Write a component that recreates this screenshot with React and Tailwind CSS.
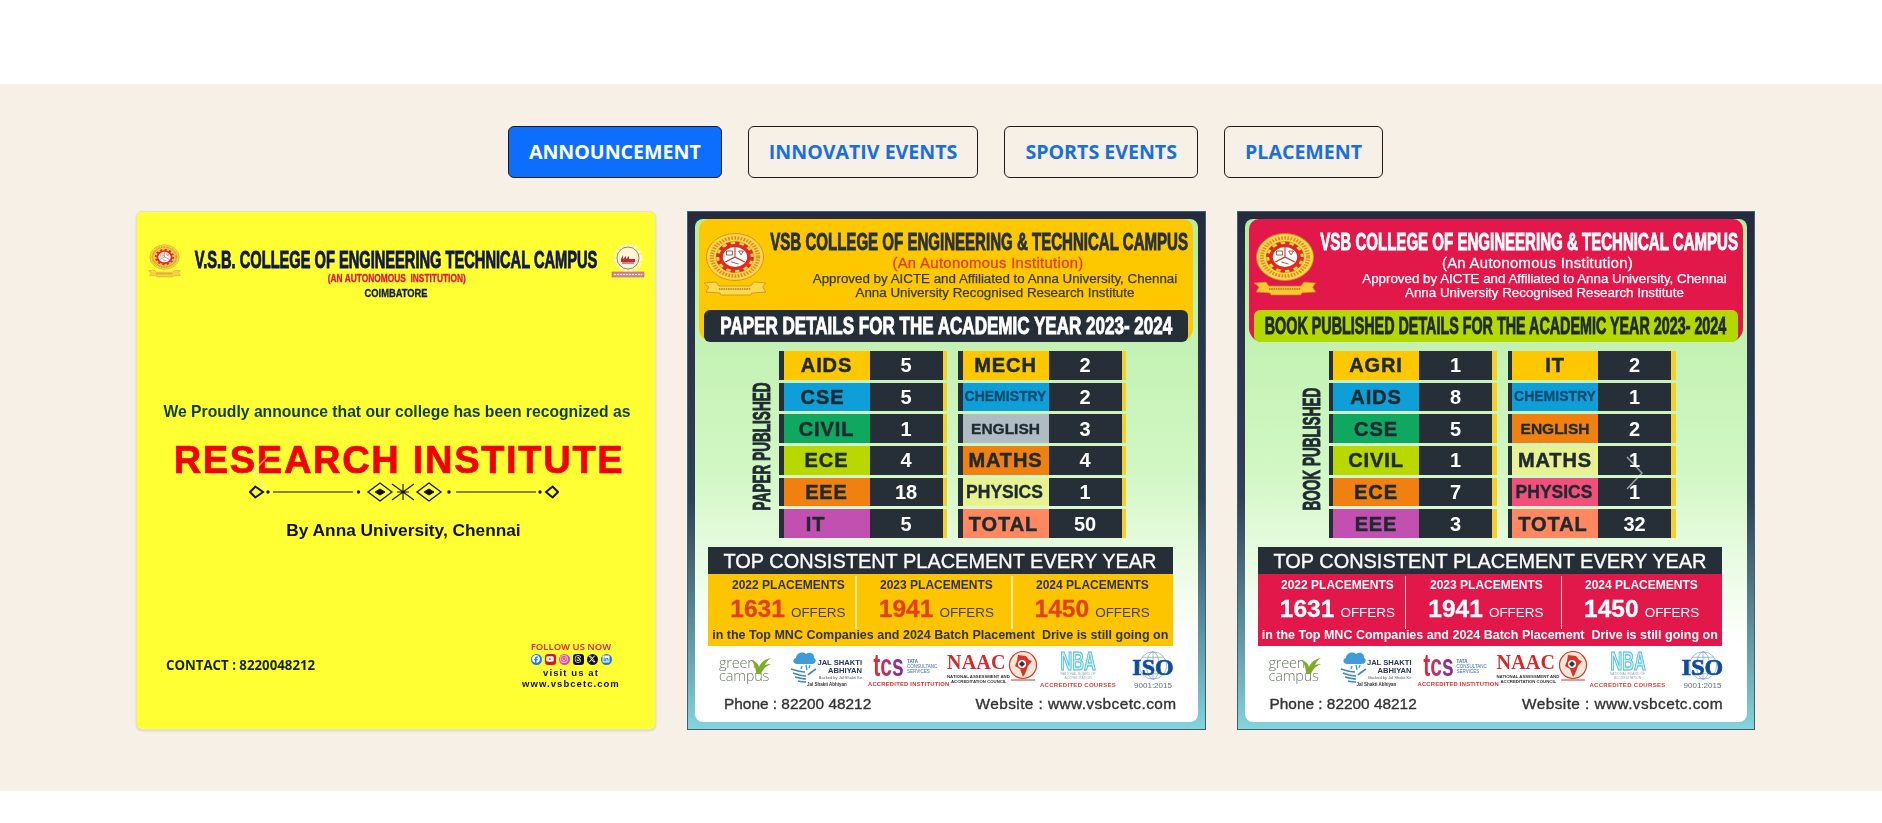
import React from "react";
import { FaFacebook, FaYoutube, FaInstagram, FaThreads, FaXTwitter, FaLinkedin } from "react-icons/fa6";

const sans = "font-['Liberation_Sans',Arial,sans-serif]";
const heavy = "font-bold [-webkit-text-stroke:0.95px_currentColor]";

function Sq({ className = "", children }) {
  return <span className={`inline-block whitespace-nowrap shrink-0 ${className}`}>{children}</span>;
}

function Seal({ className = "", ribbon = "#f6d24a" }) {
  return (
    <svg viewBox="0 0 56 65" preserveAspectRatio="none" className={className}>
      <g transform="translate(-6 0)">
        <circle cx="34" cy="25" r="23.5" fill="#fbd64a" stroke="#d98a1e" strokeWidth="0.8" />
        <circle cx="34" cy="25" r="19" fill="none" stroke="#c9761c" strokeWidth="3.4" strokeDasharray="1.4 1.2" opacity="0.75" />
        <circle cx="34" cy="25" r="15.5" fill="#fbd64a" stroke="#c9761c" strokeWidth="0.5" />
        <circle cx="34" cy="25" r="14" fill="none" stroke="#df2a20" strokeWidth="3" strokeDasharray="3.6 3.7" />
        <circle cx="34" cy="25" r="11.5" fill="#fff" stroke="#df2a20" strokeWidth="3" />
        <path d="M34 15v10M34 25l-8 5M34 25l8 5" stroke="#d62a20" strokeWidth="0.9" fill="none" />
        <path d="M27 19h5v4h-5zM37 19h4l-2 4zM31 30l6 2" stroke="#6b3b20" strokeWidth="0.7" fill="none" />
      </g>
      <g transform="scale(0.82 1)">
        <path d="M3 51l12 -1 3 4 32 0 3 -4 12 1 -3 4 3 5 -14 1 -1 2 -30 0 -1 -2 -14 -1 3 -5z" fill={ribbon} stroke="#c9801c" strokeWidth="0.7" />
        <path d="M18 57h32" stroke="#7a4a1c" strokeWidth="1" strokeDasharray="1.5 0.8" />
      </g>
    </svg>
  );
}

function AnnaSeal({ className = "" }) {
  return (
    <svg viewBox="0 0 34 34" className={className}>
      <circle cx="17" cy="14" r="12.5" fill="none" stroke="#fff8e8" strokeWidth="4" strokeDasharray="3 2" />
      <circle cx="17" cy="14" r="11" fill="#fff6d8" stroke="#a23a3a" strokeWidth="0.7" />
      <path d="M10 15l2 -4 0 4 3 -3 0 3 3 -3 0 3h6v3H10z" fill="#c02a3a" />
      <path d="M11 19h12" stroke="#7a2a3a" strokeWidth="1" />
      <rect x="1" y="28" width="32" height="5" fill="#d88a9a" stroke="#a05060" strokeWidth="0.5" />
      <path d="M3 30.5h28" stroke="#fff" strokeWidth="0.8" strokeDasharray="2 1" />
    </svg>
  );
}

function Ornament() {
  const diamond = (cx, w, h) => `M${cx - w} 10L${cx} ${10 - h}L${cx + w} 10L${cx} ${10 + h}Z`;
  return (
    <svg viewBox="0 0 310 20" className="w-[310px] h-[20px] ml-[16px]" fill="none" stroke="#111">
      <path d="M7 4L1 10L7 16M7 5L14 10L7 15" strokeWidth="2" />
      <circle cx="19" cy="10" r="1.7" fill="#111" stroke="none" />
      <path d="M24 10H104" strokeWidth="1" />
      <circle cx="109.5" cy="10" r="1.7" fill="#111" stroke="none" />
      <path d={diamond(131, 12, 9)} strokeWidth="1.3" />
      <path d={diamond(131, 5, 3)} fill="#111" />
      <path d="M143 2L165 18M143 18L165 2M154 2V18M148 10H160" strokeWidth="1.1" />
      <path d={diamond(180, 12, 9)} strokeWidth="1.3" />
      <path d={diamond(180, 5, 3)} fill="#111" />
      <circle cx="200" cy="10" r="1.7" fill="#111" stroke="none" />
      <path d="M207 10H287" strokeWidth="1" />
      <circle cx="291" cy="10" r="1.7" fill="#111" stroke="none" />
      <path d="M303 4L309 10L303 16M303 5L297 10L303 15" strokeWidth="2" />
    </svg>
  );
}

function Chevron({ left = false }) {
  return (
    <svg viewBox="0 0 18 34" className={`absolute top-[244px] w-[18px] h-[34px] ${left ? "left-[114px]" : "right-[111px]"}`} fill="none" stroke="#fff" strokeOpacity="0.55" strokeWidth="1.6">
      <path d={left ? "M16 1L1 17L16 33" : "M2 1L17 17L2 33"} />
    </svg>
  );
}

function SocialIcon({ bg, children }) {
  return <span className={`w-[11px] h-[11px] rounded-full flex items-center justify-center text-white text-[8px] ${bg}`}>{children}</span>;
}

function AnnouncementCard() {
  return (
    <div className="relative h-[519px] rounded-[6px] bg-[#ffff33] border border-[#e6e2c8] shadow-sm">
      <div className={`${sans} flex flex-col pt-[32px] blur-[0.3px]`}>
        <div className="flex px-[10px] h-[57px]">
          <Seal className="w-[35px] h-[34px] shrink-0" />
          <div className="flex-1 min-w-0 flex flex-col items-center pt-[4px]">
            <div className="h-[24px] flex items-center justify-center">
              <Sq className={`text-[24px] leading-[24px] text-[#10184a] scale-x-[0.61] ${heavy}`}>V.S.B. COLLEGE OF ENGINEERING TECHNICAL CAMPUS</Sq>
            </div>
            <div className="h-[13px] flex items-center justify-center">
              <Sq className="text-[11px] font-bold text-[#e0143c] scale-x-[0.76] [-webkit-text-stroke:0.3px_currentColor]">(AN AUTONOMOUS&nbsp; INSTITUTION)</Sq>
            </div>
            <div className="h-[16px] flex items-center justify-center">
              <Sq className="text-[11px] font-bold text-[#10184a] scale-x-[0.85] [-webkit-text-stroke:0.3px_currentColor]">COIMBATORE</Sq>
            </div>
          </div>
          <AnnaSeal className="w-[34px] h-[34px] shrink-0" />
        </div>
        <div className="mt-[101px] h-[20px] flex items-center justify-center pl-[2px]">
          <Sq className="text-[15.7px] font-bold text-[#0f3e22]">We Proudly announce that our college has been recognized as</Sq>
        </div>
        <div className="mt-[18px] h-[40px] flex items-center justify-center pl-[6px]">
          <Sq className="text-[38px] font-bold text-[#f20000] tracking-[1.7px] [-webkit-text-stroke:0.7px_currentColor]">RESEARCH INSTITUTE</Sq>
        </div>
        <div className="mt-[2px] h-[20px] flex items-center justify-center">
          <Ornament />
        </div>
        <div className="mt-[17px] h-[24px] flex items-center justify-center pl-[15px]">
          <Sq className="text-[17.3px] font-bold text-[#111]">By Anna University, Chennai</Sq>
        </div>
        <div className="mt-[98px] flex items-center justify-between pl-[29px] pr-[35px]">
          <Sq className="font-['Open_Sans',sans-serif] text-[13.25px] font-bold text-[#14240f]">CONTACT : 8220048212</Sq>
          <div className="w-[98px] flex flex-col items-center">
            <div className="h-[12px] flex items-center">
              <Sq className="font-['Open_Sans',sans-serif] text-[9.5px] font-semibold text-[#e0203c]">FOLLOW US NOW</Sq>
            </div>
            <div className="h-[12px] flex items-center gap-[3px]">
              <SocialIcon bg="bg-[#1877f2]"><FaFacebook /></SocialIcon>
              <SocialIcon bg="bg-[#e01010] !rounded-[3px]"><FaYoutube /></SocialIcon>
              <SocialIcon bg="bg-[#e8489a]"><FaInstagram /></SocialIcon>
              <SocialIcon bg="bg-[#111] !rounded-[3px]"><FaThreads /></SocialIcon>
              <SocialIcon bg="bg-[#111]"><FaXTwitter /></SocialIcon>
              <SocialIcon bg="bg-[#1a78c8]"><FaLinkedin /></SocialIcon>
            </div>
            <div className="h-[12px] mt-[2px] flex items-center">
              <Sq className="text-[9.5px] font-bold tracking-[1.1px] text-[#111]">visit us at</Sq>
            </div>
            <div className="h-[11px] flex items-center">
              <Sq className="text-[9.5px] font-bold tracking-[1.05px] text-[#111]">www.vsbcetc.com</Sq>
            </div>
          </div>
        </div>
      </div>
      <Chevron left />
    </div>
  );
}

function GreenCampus() {
  return (
    <div className="relative w-[53px] h-[34px] mt-[4px] ml-[24px] font-['Open_Sans',sans-serif] font-light text-[#6b7a68] text-[14.5px] leading-[13px]">
      <div className="mt-[4px] tracking-[-0.2px]">green<br />campus</div>
      <svg viewBox="0 0 24 24" className="absolute left-[30px] top-[0px] w-[24px] h-[24px]" fill="#7cac2a">
        <path d="M7 22C7 15 5 11 2 8c4 1 7 3 8 7 2-5 6-8 12-9-3 2-5 4-6 7 2-1 4-1 6-1-4 2-8 4-10 10z" />
      </svg>
    </div>
  );
}

function JalShakti() {
  return (
    <div className="relative w-[72px] h-[40px] ml-[18px] mt-[1px] text-right">
      <svg viewBox="0 0 30 38" className="absolute left-0 top-0 w-[30px] h-[38px]" fill="none">
        <path d="M7 15c-4 0-5-5-1-6 0-5 7-7 10-4 4-3 9 0 8 4 3 1 2 6-2 6z" fill="#3f9cd8" />
        <path d="M12 17l-1 3M16 16l1 5M20 16l-1 3" stroke="#3f9cd8" strokeWidth="1.4" />
        <path d="M1 20c6 2 10 3 14 3M3 24c5 2 9 3 13 3M5 28c4 1 8 2 11 2M8 32c3 1 6 1 8 1M26 20c-3 2-6 4-8 6" stroke="#3f86c4" strokeWidth="1.7" />
      </svg>
      <div className={`${sans} pt-[10px] text-[7.6px] leading-[8px] font-bold text-[#24365a] whitespace-nowrap`}>JAL SHAKTI</div>
      <div className={`${sans} text-[7.6px] leading-[8px] font-bold text-[#24365a]`}>ABHIYAN</div>
      <div className={`${sans} text-[4px] leading-[6px] text-[#555] whitespace-nowrap`}>Backed by Jal Shakti Ke</div>
      <div className={`${sans} absolute left-[17px] top-[33px] text-[4.5px] leading-[5px] font-bold text-[#333] whitespace-nowrap`}>Jal Shakti Abhiyan</div>
    </div>
  );
}

function Tcs() {
  return (
    <div className={`${sans} w-[72px] h-[40px] ml-[6px] mt-[5px] flex flex-col`}>
      <div className="flex h-[26px] pl-[5px]">
        <div className="w-[31px] h-[26px] flex items-center justify-center">
          <Sq className="text-[31px] leading-[26px] font-bold text-transparent bg-clip-text bg-linear-to-r from-[#e02a2a] via-[#c02a70] to-[#6a2aa0] scale-x-[0.68]">tcs</Sq>
        </div>
        <div className="ml-[3px] mt-[6px] text-[4.5px] leading-[5px] text-[#3b6fb0] whitespace-nowrap">
          <div className="font-bold">TATA</div>
          <div>CONSULTANC</div>
          <div>SERVICES</div>
        </div>
      </div>
      <div className="text-[5.8px] leading-[7px] mt-[2px] font-bold text-[#e03030] tracking-[0.25px] whitespace-nowrap">ACCREDITED INSTITUTION</div>
    </div>
  );
}

function Naac() {
  return (
    <div className={`${sans} relative w-[92px] h-[40px] ml-[7px] mt-[3px]`}>
      <div className="font-['Liberation_Serif',serif] text-[20px] leading-[22px] font-bold text-[#d42a2a] tracking-[0.2px] whitespace-nowrap">NAAC</div>
      <div className="text-[4.3px] leading-[5px] font-bold text-[#333] whitespace-nowrap mt-[1px]">NATIONAL ASSESSMENT AND</div>
      <div className="text-[4.3px] leading-[5px] font-bold text-[#333] whitespace-nowrap pl-[4px]">ACCREDITATION COUNCIL</div>
      <svg viewBox="0 0 30 32" className="absolute left-[61px] top-[0px] w-[30px] h-[32px]">
        <circle cx="15" cy="14" r="13.5" fill="#f6e6d8" stroke="#d03a2a" strokeWidth="1.2" />
        <path d="M10 4l8 1 3 4 3 1-4 5-3 8-2 3-3-8-5-3 2-5z" fill="#d8342a" />
        <circle cx="14" cy="13" r="4" fill="#fff" />
        <path d="M11 13l3-3 3 3-3 3z" fill="#333" />
        <path d="M3 29h24" stroke="#c03a2a" strokeWidth="1" />
      </svg>
    </div>
  );
}

function Nba() {
  return (
    <div className={`${sans} w-[64px] h-[42px] ml-[7px] mt-[3px] flex flex-col items-center`}>
      <div className="h-[20px] flex items-center justify-center pl-[1px]">
        <Sq className="text-[25px] leading-[20px] font-bold text-[#c8f0f4] [-webkit-text-stroke:1.2px_#4ebdd2] scale-x-[0.65]">NBA</Sq>
      </div>
      <div className="text-[3.4px] leading-[4px] text-[#9aa] whitespace-nowrap mt-[1px]">NATIONAL BOARD OF</div>
      <div className="text-[3.4px] leading-[4px] text-[#9aa] whitespace-nowrap">ACCREDITATION</div>
      <div className="text-[6px] leading-[8px] font-bold text-[#e04030] tracking-[0.3px] whitespace-nowrap mt-[1px]">ACCREDITED COURSES</div>
    </div>
  );
}

function Iso() {
  return (
    <div className={`${sans} relative w-[40px] h-[42px] ml-[23px] flex flex-col items-center`}>
      <svg viewBox="0 0 30 34" className="absolute left-[5px] top-[2px] w-[30px] h-[31px]" fill="none" stroke="#5d8ecb" strokeWidth="0.6">
        <circle cx="15" cy="17" r="15" />
        <ellipse cx="15" cy="17" rx="7" ry="15" />
        <path d="M15 2v30M3 8h24M3 26h24" />
      </svg>
      <div className="relative mt-[11px] h-[16px] flex items-center">
        <Sq className="font-['Liberation_Serif',serif] text-[24px] leading-[16px] font-bold text-[#104c9c] [-webkit-text-stroke:0.7px_currentColor]">ISO</Sq>
      </div>
      <div className="relative mt-[6px] text-[8px] leading-[9px] text-[#5a6e86] whitespace-nowrap">9001:2015</div>
    </div>
  );
}

const Y = "bg-[#fdc800]";
const B = "bg-[#0f9fd8]";
const G = "bg-[#0ea860]";
const L = "bg-[#b8d800]";
const O = "bg-[#f08010]";
const P = "bg-[#c250b0]";

function Row({ r }) {
  const [label, value, bg, cls] = r;
  return (
    <div className="flex h-[28.5px]">
      <div className="w-[4.5px] bg-[#262e37]" />
      <div className={`w-[86px] flex items-center justify-center ${bg}`}>
        <Sq className={`font-bold ${cls}`}>{label}</Sq>
      </div>
      <div className="w-[73px] bg-[#262e37] flex items-center justify-center text-white text-[20px] font-bold">{value}</div>
      <div className="w-[4.5px] bg-[#f5cf2a]" />
    </div>
  );
}

const big = "text-[20px] tracking-[0.9px] text-[#1f2a30] [-webkit-text-stroke:0.5px_currentColor]";
const mid = "text-[#1f2a30] [-webkit-text-stroke:0.35px_currentColor]";

function Placement({ bg, numColor, offerColor, textColor, divider }) {
  const cols = [
    ["2022 PLACEMENTS", "1631", "w-[148px] pl-[12px]"],
    ["2023 PLACEMENTS", "1941", "w-[156px] pl-[5px]"],
    ["2024 PLACEMENTS", "1450", "w-[160.5px]"],
  ];
  return (
    <div className="mt-[9px] mx-[13px] w-[464.5px]">
      <div className="h-[27px] bg-[#262e37] flex items-center justify-center">
        <Sq className="text-[21px] text-white scale-x-[0.95] [-webkit-text-stroke:0.35px_currentColor]">TOP CONSISTENT PLACEMENT EVERY YEAR</Sq>
      </div>
      <div className={`h-[72px] ${bg}`}>
        <div className="flex h-[52px]">
          {cols.map(([h, n, c], i) => (
            <React.Fragment key={h}>
              {i > 0 && <div className={`w-[1.5px] -mx-[0.75px] h-[53px] mt-[2px] ${divider}`} />}
              <div className={`flex flex-col items-center ${c}`}>
                <div className="h-[23px] flex items-center justify-center">
                  <Sq className={`text-[13.5px] font-bold scale-x-[0.89] ${textColor}`}>{h}</Sq>
                </div>
                <div className="h-[24px] flex items-baseline justify-center">
                  <Sq className={`text-[24.5px] leading-[24px] font-bold ${numColor} [-webkit-text-stroke:0.3px_currentColor]`}>{n}</Sq>
                  <Sq className={`text-[13.5px] ml-[6px] ${offerColor}`}>OFFERS</Sq>
                </div>
              </div>
            </React.Fragment>
          ))}
        </div>
        <div className="h-[18px] flex items-center justify-center">
          <Sq className={`text-[12.5px] font-bold ${textColor}`}>in the Top MNC Companies and 2024 Batch Placement&nbsp; Drive is still going on</Sq>
        </div>
      </div>
    </div>
  );
}

function Poster({ p }) {
  return (
    <div className="relative h-[519px] border border-[#3f5f6c] p-[7px] bg-linear-to-b from-[#262a3e] via-[#2e4155] via-55% to-[#83d4dd]">
      <div className={`${sans} h-full rounded-[8px] bg-linear-to-b from-[#b4eca2] via-[#d2f7c4] via-50% to-white to-85% flex flex-col blur-[0.3px] overflow-hidden`}>
        <div className={`mx-[4px] w-[494px] h-[123px] rounded-t-[10px] rounded-b-[14px] flex flex-col ${p.headBg}`}>
          <div className="flex h-[91px]">
            <Seal className="ml-[2px] mt-[13px] w-[68px] h-[65px] shrink-0" ribbon={p.ribbon} />
            <div className="ml-[1px] w-[419px] flex flex-col items-center pt-[13px]">
              <div className="h-[20px] flex items-center justify-center">
                <Sq className={`text-[24px] leading-[20px] scale-x-[0.627] ${heavy} ${p.titleColor}`}>VSB COLLEGE OF ENGINEERING &amp; TECHNICAL CAMPUS</Sq>
              </div>
              <div className="h-[16px] mt-[3px] flex items-center justify-center pl-[17px]">
                <Sq className={`text-[14.8px] [-webkit-text-stroke:0.3px_currentColor] tracking-[0.35px] ${p.autoColor}`}>(An Autonomous Institution)</Sq>
              </div>
              <div className="h-[14px] mt-[1px] flex items-center justify-center pl-[31px]">
                <Sq className={`text-[13.35px] [-webkit-text-stroke:0.25px_currentColor] ${p.textColor}`}>Approved by AICTE and Affiliated to Anna University, Chennai</Sq>
              </div>
              <div className="h-[14px] flex items-center justify-center pl-[31px]">
                <Sq className={`text-[13.35px] [-webkit-text-stroke:0.25px_currentColor] ${p.textColor}`}>Anna University Recognised Research Institute</Sq>
              </div>
            </div>
          </div>
          <div className={`mx-[5px] h-[32px] rounded-[6px] flex items-center justify-center ${p.barBg}`}>
            <Sq className={`text-[24px] leading-[24px] ${heavy} ${p.barScale} ${p.barColor}`}>{p.bar}</Sq>
          </div>
        </div>

        <div className="mt-[9px] flex">
          <div className={`ml-[59px] w-[16px] h-[187px] flex items-center justify-center ${p.vertPad}`}>
            <Sq className={`[writing-mode:vertical-rl] rotate-180 text-[23px] leading-[16px] text-[#1f2a30] ${p.vertScale} ${heavy}`}>{p.vert}</Sq>
          </div>
          <div className="ml-[9px] w-[168px] flex flex-col gap-[3.2px]">
            {p.left.map((r) => <Row key={r[0]} r={r} />)}
          </div>
          <div className="ml-[11px] w-[168px] flex flex-col gap-[3.2px]">
            {p.right.map((r) => <Row key={r[0]} r={r} />)}
          </div>
        </div>

        <Placement {...p.place} />

        <div className="h-[47px] bg-white flex pt-[2px]">
          <GreenCampus />
          <JalShakti />
          <Tcs />
          <Naac />
          <Nba />
          <Iso />
        </div>
        <div className={`h-[22px] flex items-center justify-between ${p.footPad} text-[15.4px] text-[#333] [-webkit-text-stroke:0.35px_currentColor]`}>
          <span>Phone : 82200 48212</span>
          <span className="tracking-[0.42px]">Website : www.vsbcetc.com</span>
        </div>
      </div>
      {p.chevron && <Chevron />}
    </div>
  );
}

const paper = {
  headBg: "bg-[#fdc800]",
  ribbon: "#fbd94e",
  titleColor: "text-[#28303a]",
  autoColor: "text-[#e63a1c]",
  textColor: "text-[#3a3a30]",
  barBg: "bg-[#262e37]",
  barColor: "text-white",
  barScale: "scale-x-[0.71]",
  bar: "PAPER DETAILS FOR THE ACADEMIC YEAR 2023- 2024",
  vert: "PAPER PUBLISHED",
  vertScale: "scale-y-[0.59]",
  vertPad: "pt-[4px]",
  footPad: "pl-[29px] pr-[21px]",
  left: [
    ["AIDS", "5", Y, big],
    ["CSE", "5", B, `${big} mr-[8px]`],
    ["CIVIL", "1", G, big],
    ["ECE", "4", L, big],
    ["EEE", "18", O, big],
    ["IT", "5", P, `${big} mr-[22px]`],
  ],
  right: [
    ["MECH", "2", Y, big],
    ["CHEMISTRY", "2", B, "text-[14px] text-[#0d4a6e] [-webkit-text-stroke:0.3px_currentColor]"],
    ["ENGLISH", "3", "bg-[#b0bcc4]", `text-[15.5px] ${mid}`],
    ["MATHS", "4", O, big],
    ["PHYSICS", "1", "bg-[#e8f290]", `text-[17.5px] ${mid} mr-[2px]`],
    ["TOTAL", "50", "bg-[#ff8860]", `${big} mr-[4px]`],
  ],
  place: {
    bg: "bg-[#fdc400]",
    numColor: "text-[#e2401c]",
    offerColor: "text-[#444]",
    textColor: "text-[#333]",
    divider: "bg-[#fbe7a0]",
  },
};

const book = {
  headBg: "bg-[#e2174a]",
  ribbon: "#f9c832",
  titleColor: "text-white",
  autoColor: "text-white",
  textColor: "text-white",
  barBg: "bg-[#b4d900]",
  barColor: "text-[#1f2a30]",
  barScale: "scale-x-[0.597]",
  bar: "BOOK PUBLISHED DETAILS FOR THE ACADEMIC YEAR 2023- 2024",
  vert: "BOOK PUBLISHED",
  vertScale: "scale-y-[0.59]",
  vertPad: "pt-[9px]",
  footPad: "pl-[25px] pr-[24px]",
  chevron: true,
  left: [
    ["AGRI", "1", Y, big],
    ["AIDS", "8", B, big],
    ["CSE", "5", G, big],
    ["CIVIL", "1", L, big],
    ["ECE", "7", O, big],
    ["EEE", "3", P, big],
  ],
  right: [
    ["IT", "2", Y, big],
    ["CHEMISTRY", "1", B, "text-[14px] text-[#0d4a6e] [-webkit-text-stroke:0.3px_currentColor]"],
    ["ENGLISH", "2", O, `text-[15.5px] ${mid}`],
    ["MATHS", "1", "bg-[#e8f290]", big],
    ["PHYSICS", "1", "bg-[#f0507a]", `text-[17.5px] ${mid} mr-[2px]`],
    ["TOTAL", "32", "bg-[#ff8860]", `${big} mr-[4px]`],
  ],
  place: {
    bg: "bg-[#e2174a]",
    numColor: "text-white",
    offerColor: "text-white",
    textColor: "text-white",
    divider: "bg-white",
  },
};

function Tab({ active, children }) {
  return (
    <button className={`h-[52px] px-[20px] rounded-[6px] border border-[#1c1c1c] font-['Open_Sans',sans-serif] text-[19.6px] font-bold ${active ? "bg-[#0d6efd] text-white" : "text-[#1a6fd8]"}`}>
      {children}
    </button>
  );
}

export default function App() {
  return (
    <div className="min-h-[823px] bg-white">
      <div className="h-[84px]" />
      <section className="bg-[#f6f0e6] h-[707px] pt-[42px] pl-[136px] pr-[127px]">
        <div className="flex justify-center gap-[26px]">
          <Tab active>ANNOUNCEMENT</Tab>
          <Tab>INNOVATIV EVENTS</Tab>
          <Tab>SPORTS EVENTS</Tab>
          <Tab>PLACEMENT</Tab>
        </div>
        <div className="mt-[33px] grid grid-cols-[520px_518.5px_518.5px] gap-[31px]">
          <AnnouncementCard />
          <Poster p={paper} />
          <Poster p={book} />
        </div>
      </section>
    </div>
  );
}
